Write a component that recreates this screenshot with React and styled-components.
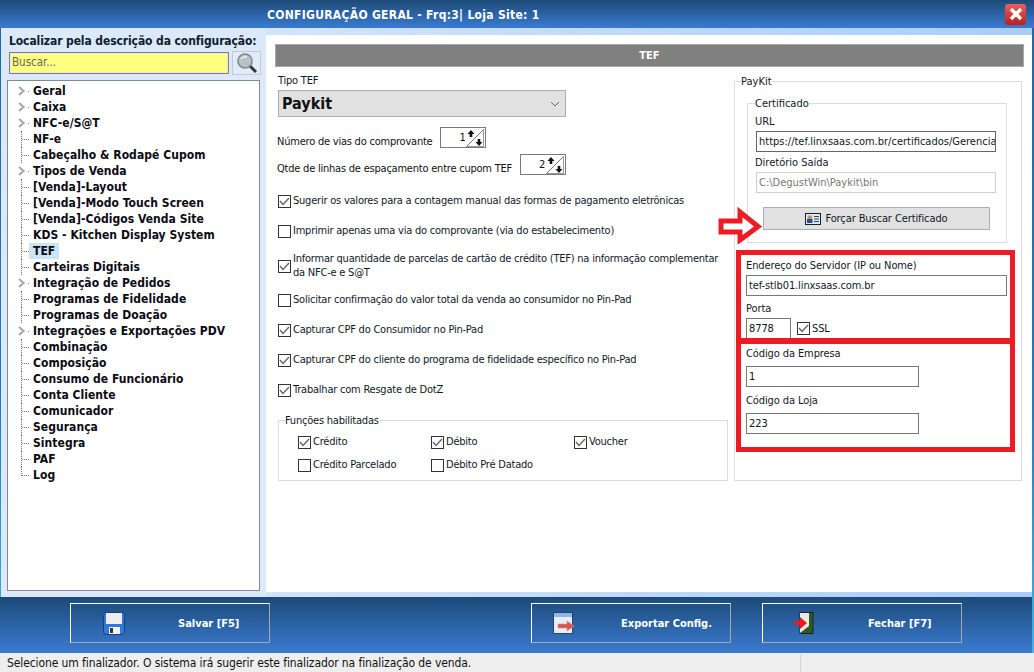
import styled, { createGlobalStyle } from "styled-components";

const UI_FONT = `"DejaVu Sans Condensed", "Noto Sans", "Liberation Sans", sans-serif`;

const GlobalStyle = createGlobalStyle`
  html, body { margin: 0; padding: 0; background: #fff; }
  body { font-family: ${UI_FONT}; font-size: 11px; color: #111; }
  * { box-sizing: border-box; }
  fieldset { margin: 0; min-width: 0; }
`;

const MENU = [
  ["Geral", 1], ["Caixa", 1], ["NFC-e/S@T", 1], ["NF-e", 0], ["Cabeçalho & Rodapé Cupom", 0],
  ["Tipos de Venda", 1], ["[Venda]-Layout", 0], ["[Venda]-Modo Touch Screen", 0],
  ["[Venda]-Códigos Venda Site", 0], ["KDS - Kitchen Display System", 0], ["TEF", 0],
  ["Carteiras Digitais", 0], ["Integração de Pedidos", 1], ["Programas de Fidelidade", 0],
  ["Programas de Doação", 0], ["Integrações e Exportações PDV", 1], ["Combinação", 0],
  ["Composição", 0], ["Consumo de Funcionário", 0], ["Conta Cliente", 0], ["Comunicador", 0],
  ["Segurança", 0], ["Sintegra", 0], ["PAF", 0], ["Log", 0],
];

export default function App() {
  return (
    <Window>
      <GlobalStyle />
      <TitleBar>
        <Title>CONFIGURAÇÃO GERAL - Frq:3| Loja Site: 1</Title>
        <CloseButton>
          <svg width="14" height="14" viewBox="0 0 14 14">
            <path d="M2 2 L12 12 M12 2 L2 12" stroke="#fff" strokeWidth="3.4" />
          </svg>
        </CloseButton>
      </TitleBar>
      <Body>
        <Sidebar>
          <SearchLabel>Localizar pela descrição da configuração:</SearchLabel>
          <SearchRow>
            <SearchInput>Buscar...</SearchInput>
            <SearchButton>
              <svg width="22" height="22" viewBox="0 0 22 22">
                <path d="M13 13 L20 20" stroke="#333" strokeWidth="3" />
                <circle cx="9" cy="9" r="7" fill="#b8c4c4" stroke="#7c8a8a" strokeWidth="1.6" />
                <path d="M5 7 Q7 4 11 5" stroke="#eef" strokeWidth="1.5" fill="none" />
              </svg>
            </SearchButton>
          </SearchRow>
          <Tree>
            {MENU.map(([name, hasChildren], i) => (
              <TreeRow key={name}>
                <Connector $line={i >= 3 && !hasChildren} $dot={hasChildren} $last={name === "Log"}>
                  {hasChildren ? (
                    <Chevron width="9" height="10" viewBox="0 0 9 10">
                      <path d="M2 1 L6.5 5 L2 9" stroke="#a6a6a6" strokeWidth="2" fill="none" />
                    </Chevron>
                  ) : null}
                </Connector>
                <TreeText $selected={name === "TEF"}>{name}</TreeText>
              </TreeRow>
            ))}
          </Tree>
        </Sidebar>
        <Main>
          <SectionHeader>TEF</SectionHeader>
          <Columns>
            <LeftCol>
              <Label>Tipo TEF</Label>
              <TypeSelect>
                <span>Paykit</span>
                <svg width="10" height="6" viewBox="0 0 10 6">
                  <path d="M1 1 L5 5 L9 1" stroke="#666" fill="none" />
                </svg>
              </TypeSelect>
              <SpinRow $top={10}>
                <SpinLabel>Número de vias do comprovante</SpinLabel>
                <Spin value="1" />
              </SpinRow>
              <SpinRow $top={6}>
                <SpinLabel>Qtde de linhas de espaçamento entre cupom TEF</SpinLabel>
                <Spin value="2" />
              </SpinRow>
              <CheckList>
                <Check checked>Sugerir os valores para a contagem manual das formas de pagamento eletrônicas</Check>
                <Check>Imprimir apenas uma via do comprovante (via do estabelecimento)</Check>
                <Check checked wrapped>
                  Informar quantidade de parcelas de cartão de crédito (TEF) na informação complementar da NFC-e e S@T
                </Check>
                <Check>Solicitar confirmação do valor total da venda ao consumidor no Pin-Pad</Check>
                <Check checked>Capturar CPF do Consumidor no Pin-Pad</Check>
                <Check checked>Capturar CPF do cliente do programa de fidelidade específico no Pin-Pad</Check>
                <Check checked>Trabalhar com Resgate de DotZ</Check>
              </CheckList>
              <FuncGroup>
                <legend>Funções habilitadas</legend>
                <FuncGrid>
                  <Check checked>Crédito</Check>
                  <Check checked>Débito</Check>
                  <Check checked>Voucher</Check>
                  <Check>Crédito Parcelado</Check>
                  <Check>Débito Pré Datado</Check>
                </FuncGrid>
              </FuncGroup>
            </LeftCol>
            <RightCol>
              <PayKit>
                <legend>PayKit</legend>
                <CertGroup>
                  <legend>Certificado</legend>
                  <Label $left={-1}>URL</Label>
                  <TextField $dark>https://tef.linxsaas.com.br/certificados/Gerencia</TextField>
                  <Label $left={-1} $top={3}>Diretório Saída</Label>
                  <TextField $disabled>C:\DegustWin\Paykit\bin</TextField>
                  <CertButton>
                    <svg width="16" height="12" viewBox="0 0 16 12">
                      <rect x=".5" y=".5" width="15" height="11" fill="#dfe8f4" stroke="#123" />
                      <rect x="2.5" y="2.5" width="4.5" height="3.5" fill="#c9965f" />
                      <rect x="2" y="6" width="5.5" height="4" fill="#25508f" />
                      <path d="M9 3.5h5M9 6h5M9 8.5h5" stroke="#345" />
                    </svg>
                    Forçar Buscar Certificado
                  </CertButton>
                  <Arrow viewBox="0 0 44 37" width="44" height="37">
                    <path d="M3 14 H22 V5 L40 19.5 L22 33 V25 H3 Z" fill="#fff" stroke="#ed1c24" strokeWidth="5" />
                  </Arrow>
                </CertGroup>
                <Highlight>
                  <ServerBlock>
                    <Label>Endereço do Servidor (IP ou Nome)</Label>
                    <TextField>tef-stlb01.linxsaas.com.br</TextField>
                    <Label $top={5}>Porta</Label>
                    <PortRow>
                      <PortField>8778</PortField>
                      <Check checked>SSL</Check>
                    </PortRow>
                  </ServerBlock>
                  <CodeBlock>
                    <Label>Código da Empresa</Label>
                    <CodeField>1</CodeField>
                    <Label $top={6}>Código da Loja</Label>
                    <CodeField>223</CodeField>
                  </CodeBlock>
                </Highlight>
              </PayKit>
            </RightCol>
          </Columns>
        </Main>
      </Body>
      <Footer>
        <FooterButton>
          <IconSlot $left={32}>
            <svg width="22" height="23" viewBox="0 0 22 23">
              <rect x=".5" y=".5" width="21" height="22" rx="3" fill="#2f78e0" stroke="#1c3f78" />
              <rect x="3" y="1" width="16" height="11" fill="#eeeeee" />
              <rect x="6" y="15" width="11" height="7" fill="#f2f2f2" />
              <rect x="7" y="16" width="3" height="5" fill="#333" />
            </svg>
          </IconSlot>
          <ButtonText $left={107}>Salvar [F5]</ButtonText>
        </FooterButton>
        <FooterButton $ml={261}>
          <IconSlot $left={21}>
            <svg width="22" height="22" viewBox="0 0 22 22">
              <rect x=".5" y=".5" width="19" height="21" fill="#e8eef8" stroke="#2a4468" />
              <rect x="1" y="1" width="18" height="4" fill="#8ab8e8" />
              <path d="M5 12 H14 V9 L21 14 L14 19 V16 H5 Z" fill="#e2504c" stroke="#c99" strokeWidth=".6" />
            </svg>
          </IconSlot>
          <ButtonText $left={89}>Exportar Config.</ButtonText>
        </FooterButton>
        <FooterButton $ml={31}>
          <IconSlot $left={31}>
            <svg width="20" height="22" viewBox="0 0 20 22">
              <rect x="6" y=".5" width="13" height="21" fill="#2e5a20" stroke="#222" />
              <path d="M6 1 H15 V14 L6 21 Z" fill="#e6e8e8" />
              <path d="M0 9 H6 V5 L13 11 L6 17 V13 H0 Z" fill="#f01818" />
            </svg>
          </IconSlot>
          <ButtonText $left={105}>Fechar [F7]</ButtonText>
        </FooterButton>
      </Footer>
      <StatusBar>
        <StatusMain>Selecione um finalizador. O sistema irá sugerir este finalizador na finalização de venda.</StatusMain>
        <StatusEnd />
      </StatusBar>
    </Window>
  );
}

function Spin({ value }) {
  return (
    <SpinBox>
      <span>{value}</span>
      <svg width="18" height="18" viewBox="0 0 18 18">
        <path d="M0 18 L18 0" stroke="#777" />
        <path d="M0 17.5 H17.5 V0" stroke="#999" fill="none" />
        <path d="M5 1 L8.5 5 H6.3 V8 H3.7 V5 H1.5 Z" fill="#111" />
        <path d="M13 17 L9.5 13 H11.7 V10 H14.3 V13 H16.5 Z" fill="#111" />
      </svg>
    </SpinBox>
  );
}

function Check({ checked, wrapped, children }) {
  return (
    <CheckRow $wrapped={wrapped}>
      <CheckBox>
        {checked && (
          <svg width="11" height="9" viewBox="0 0 11 9">
            <path d="M1 4 L4 7.5 L10 1" stroke="#666" strokeWidth="1.4" fill="none" />
          </svg>
        )}
      </CheckBox>
      <CheckText>{children}</CheckText>
    </CheckRow>
  );
}

const Window = styled.div`
  width: 1034px;
  height: 672px;
  display: flex;
  flex-direction: column;
  overflow: hidden;
  background: linear-gradient(180deg, #1c6aa0, #1d7cc0 60%, #45b8e0);
`;

const TitleBar = styled.div`
  height: 28px;
  flex: none;
  display: flex;
  align-items: center;
  justify-content: space-between;
  padding: 0 8px 0 267px;
  background: linear-gradient(180deg, #1d4a78, #3a7bd1);
`;

const Title = styled.div`
  color: #fff;
  padding-top: 1px;
  font: bold 12px ${UI_FONT};
  letter-spacing: 0.3px;
`;

const CloseButton = styled.div`
  width: 21px;
  height: 21px;
  border-radius: 3px;
  display: flex;
  align-items: center;
  justify-content: center;
  background: linear-gradient(180deg, #e8605c, #b82020);
`;

const Body = styled.div`
  flex: none;
  height: 569px;
  margin: 0 2px 0 1px;
  display: flex;
  background: linear-gradient(90deg, #e0ecfb, #a8cdf8);
`;

const Sidebar = styled.div`
  width: 265px;
  flex: none;
  padding: 6px 0 0 6px;
  display: flex;
  flex-direction: column;
  background: #dce9fb;
`;

const SearchLabel = styled.div`
  font: bold 12px/14px ${UI_FONT};
  letter-spacing: -0.1px;
  margin: 0 0 4px 2px;
  color: #10202c;
  white-space: nowrap;
`;

const SearchRow = styled.div`
  display: flex;
  align-items: flex-start;
  margin-left: 2px;
  gap: 3px;
`;

const SearchInput = styled.div`
  width: 220px;
  height: 22px;
  background: #ffff80;
  border: 1px solid #808080;
  outline: 1px solid #e8e8e8;
  outline-offset: -2px;
  padding-left: 2px;
  font-size: 11.5px;
  line-height: 19px;
  color: #666;
`;

const SearchButton = styled.div`
  width: 29px;
  height: 24px;
  margin-top: -1px;
  border: 1px solid #c8c8c8;
  background: #dfeafa;
  display: flex;
  align-items: center;
  justify-content: center;
`;

const Tree = styled.div`
  width: 253px;
  height: 511px;
  margin-top: 5px;
  padding: 2px 0 0 13px;
  background: #fff;
  border: 1px solid #848890;
`;

const TreeRow = styled.div`
  height: 16px;
  display: flex;
  align-items: flex-start;
`;

const Connector = styled.span`
  width: 8px;
  flex: none;
  height: ${(p) => (p.$last ? 9 : 16)}px;
  display: flex;
  border-left: ${(p) => (p.$line ? "1px dotted #777" : "0")};
  background: ${(p) =>
    p.$line
      ? "repeating-linear-gradient(90deg, #777 0 1px, transparent 1px 2px) 0 8px / 100% 1px no-repeat"
      : p.$dot
        ? "linear-gradient(#888, #888) 7px 8px / 1px 1px no-repeat"
        : "none"};
`;

const Chevron = styled.svg`
  flex: none;
  margin: 3px 0 0 -4px;
`;

const TreeText = styled.span`
  padding: 0 4px;
  font: bold 12px/16px ${UI_FONT};
  letter-spacing: 0.05px;
  color: #0a0a14;
  white-space: nowrap;
  background: ${(p) => (p.$selected ? "#cce4f7" : "transparent")};
`;

const Main = styled.div`
  flex: 1;
  margin-top: 7px;
  margin-bottom: 5px;
  padding: 9px 8px 0 9px;
  background: #fff;
`;

const SectionHeader = styled.div`
  height: 23px;
  background: #808080;
  border: 1px solid #a8a8a8;
  color: #fff;
  font: bold 11px/22px ${UI_FONT};
  text-align: center;
`;

const Columns = styled.div`
  display: flex;
  margin-top: 6px;
`;

const LeftCol = styled.div`
  width: 459px;
  flex: none;
  padding-left: 3px;
  letter-spacing: -0.22px;
`;

const RightCol = styled.div`
  flex: 1;
`;

const Label = styled.div`
  font-size: 11px;
  line-height: 15px;
  color: #101828;
  margin-top: ${(p) => p.$top || 0}px;
  margin-left: ${(p) => p.$left || 0}px;
  white-space: nowrap;
`;

const TypeSelect = styled.div`
  width: 288px;
  height: 27px;
  margin-top: 2px;
  padding: 0 5px 0 3px;
  background: #e1e1e1;
  border: 1px solid #adadad;
  display: flex;
  align-items: center;
  justify-content: space-between;
  font: bold 16px ${UI_FONT};
  letter-spacing: 0;
`;

const SpinRow = styled.div`
  display: flex;
  align-items: flex-start;
  gap: 8px;
  height: 21px;
  margin-top: ${(p) => p.$top}px;
  white-space: nowrap;
  line-height: 15px;
`;

const SpinLabel = styled.span`
  padding-top: 7px;
  margin-left: -1px;
`;

const SpinBox = styled.div`
  width: 46px;
  height: 21px;
  border: 1px solid #7a7a7a;
  background: #fff;
  display: flex;
  align-items: center;
  justify-content: flex-end;
  padding-right: 1px;
  gap: 1px;
`;

const CheckList = styled.div`
  display: flex;
  flex-direction: column;
  gap: 16px;
  margin-top: 19px;
  width: 452px;
`;

const CheckRow = styled.div`
  display: flex;
  align-items: center;
  gap: 2px;
  margin: ${(p) => (p.$wrapped ? "-2px 0 -3px" : "0")};
`;

const CheckBox = styled.span`
  width: 13px;
  height: 13px;
  flex: none;
  border: 1px solid #333;
  background: #fff;
  display: flex;
  align-items: center;
  justify-content: center;
`;

const CheckText = styled.span`
  font-size: 11px;
  line-height: 14px;
  color: #101828;
`;

const FuncGroup = styled.fieldset`
  width: 450px;
  height: 67px;
  margin-top: 17px;
  padding: 8px 0 0 19px;
  border: 1px solid #dcdcdc;
  legend {
    padding: 0;
    margin-left: -13px;
    font-size: 11px;
    line-height: 13px;
    color: #101828;
  }
`;

const FuncGrid = styled.div`
  display: grid;
  grid-template-columns: 133px 143px 1fr;
  row-gap: 9px;
`;

const PayKit = styled.fieldset`
  width: 288px;
  height: 406px;
  padding: 9px 0 0 12px;
  margin-top: 2px;
  border: 1px solid #dcdcdc;
  position: relative;
  legend {
    padding: 0;
    margin-left: -6px;
    font-size: 11px;
    line-height: 13px;
    color: #101828;
  }
`;

const CertGroup = styled.fieldset`
  width: 260px;
  height: 146px;
  padding: 4px 10px 0 8px;
  border: 1px solid #dcdcdc;
  position: relative;
  legend {
    padding: 0;
    margin-left: -1px;
    font-size: 11px;
    line-height: 13px;
    color: #101828;
  }
`;

const TextField = styled.div`
  height: 21px;
  margin-top: 2px;
  padding-left: 2px;
  border: 1px solid ${(p) => (p.$dark ? "#666" : p.$disabled ? "#d0d0d0" : "#777")};
  color: ${(p) => (p.$disabled ? "#777" : "#101828")};
  background: #fff;
  font-size: 11px;
  line-height: 19px;
  white-space: nowrap;
  overflow: hidden;
`;

const CertButton = styled.div`
  width: 227px;
  height: 23px;
  margin: 14px 0 0 7px;
  background: #e1e1e1;
  border: 1px solid #adadad;
  display: flex;
  align-items: center;
  justify-content: center;
  gap: 4px;
  font-size: 11px;
  letter-spacing: -0.1px;
  color: #101828;
`;

const Arrow = styled.svg`
  position: absolute;
  left: -30px;
  top: 97px;
`;

const Highlight = styled.div`
  width: 279px;
  height: 202px;
  margin: 7px 0 0 -11px;
  border: 5px solid #ed1c24;
  background: #fff;
  display: flex;
  flex-direction: column;
  letter-spacing: -0.1px;
`;

const ServerBlock = styled.div`
  height: 83px;
  flex: none;
  padding: 3px 3px 0 5px;
  overflow: hidden;
`;

const PortRow = styled.div`
  display: flex;
  align-items: center;
  gap: 6px;
  margin-top: 2px;
`;

const PortField = styled.div`
  width: 45px;
  height: 21px;
  padding-left: 2px;
  border: 1px solid #777;
  font-size: 11px;
  line-height: 19px;
`;

const CodeBlock = styled.div`
  flex: 1;
  border-top: 6px solid #ed1c24;
  padding: 2px 0 0 5px;
`;

const CodeField = styled.div`
  width: 173px;
  height: 21px;
  margin-top: 5px;
  padding-left: 2px;
  border: 1px solid #777;
  font-size: 11px;
  line-height: 19px;
`;

const Footer = styled.div`
  height: 56px;
  flex: none;
  margin: 0 2px 0 0;
  padding: 6px 0 0 70px;
  display: flex;
  align-items: flex-start;
  background: linear-gradient(180deg, #1d4a78, #3a7bd1);
`;

const FooterButton = styled.div`
  width: 200px;
  height: 40px;
  margin-left: ${(p) => p.$ml || 0}px;
  border: 1px solid #fff;
  border-right-color: #a8a8a8;
  border-bottom-color: #a8a8a8;
  position: relative;
`;

const IconSlot = styled.span`
  position: absolute;
  left: ${(p) => p.$left}px;
  top: 8px;
  display: flex;
`;

const ButtonText = styled.span`
  position: absolute;
  left: ${(p) => p.$left}px;
  top: 13px;
  color: #fff;
  font: bold 11px/14px ${UI_FONT};
  white-space: nowrap;
`;

const StatusBar = styled.div`
  flex: 1;
  display: flex;
  background: #eeeeee;
  font-size: 12px;
  letter-spacing: -0.1px;
  line-height: 19px;
  color: #111;
`;

const StatusMain = styled.div`
  width: 801px;
  padding-left: 7px;
  border-right: 1px solid #d4d4d4;
  margin-top: 1px;
`;

const StatusEnd = styled.div`
  flex: 1;
`;
